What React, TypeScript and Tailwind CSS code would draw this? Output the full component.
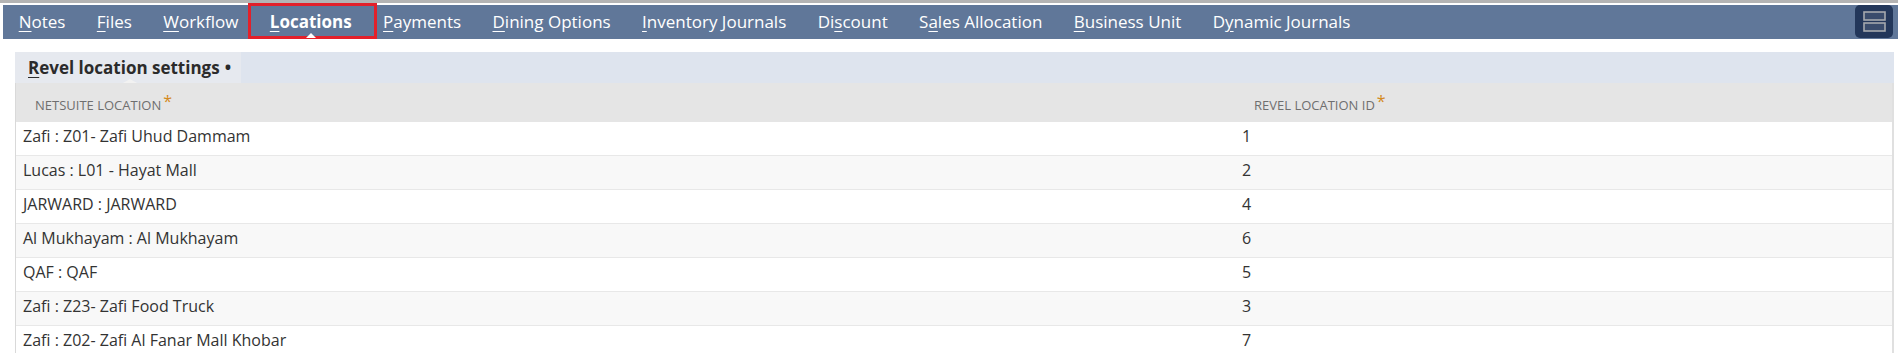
import React from 'react'

type Tab = { pre: string; key: string; post: string; active?: boolean }

const tabs: Tab[] = [
  { pre: '', key: 'N', post: 'otes' },
  { pre: '', key: 'F', post: 'iles' },
  { pre: '', key: 'W', post: 'orkflow' },
  { pre: '', key: 'L', post: 'ocations', active: true },
  { pre: '', key: 'P', post: 'ayments' },
  { pre: '', key: 'D', post: 'ining Options' },
  { pre: '', key: 'I', post: 'nventory Journals' },
  { pre: 'Di', key: 's', post: 'count' },
  { pre: 'S', key: 'a', post: 'les Allocation' },
  { pre: '', key: 'B', post: 'usiness Unit' },
  { pre: 'D', key: 'y', post: 'namic Journals' },
]

const rows = [
  ['Zafi : Z01- Zafi Uhud Dammam', '1'],
  ['Lucas : L01 - Hayat Mall', '2'],
  ['JARWARD : JARWARD', '4'],
  ['Al Mukhayam : Al Mukhayam', '6'],
  ['QAF : QAF', '5'],
  ['Zafi : Z23- Zafi Food Truck', '3'],
  ['Zafi : Z02- Zafi Al Fanar Mall Khobar', '7'],
]

function NavTab({ tab }: { tab: Tab }) {
  return (
    <div className="relative flex items-center px-[15.7px] h-full">
      <span className={tab.active ? 'font-bold' : ''}>
        {tab.pre}
        <span className="underline underline-offset-[3px]">{tab.key}</span>
        {tab.post}
      </span>
      {tab.active && (
        <>
          <span className="absolute left-[-6px] right-[-10px] top-[-2px] bottom-0 border-[3px] border-[#e3202a]" />
          <span className="absolute bottom-[1px] left-1/2 -translate-x-1/2 w-0 h-0 border-l-[5px] border-r-[5px] border-b-[5px] border-l-transparent border-r-transparent border-b-white" />
        </>
      )}
    </div>
  )
}

function Star() {
  return <span className="text-[#d48a1c] text-[16px] leading-none relative top-[-3px] ml-[2px]">*</span>
}

export default function App() {
  return (
    <div className="w-full bg-white text-[#333] font-['Open_Sans',sans-serif]">
      <div className="h-[3px] bg-[#b4b4b4]" />
      <div className="h-[2px]" />
      <div className="ml-[3px] h-[34px] bg-[#607799] flex items-stretch text-white text-[17px]">
        <div className="flex items-stretch">
          {tabs.map(t => (
            <NavTab key={t.key + t.post} tab={t} />
          ))}
        </div>
        <div className="ml-auto mr-[5px] flex items-start">
          <button className="w-[38px] h-[33px] rounded-[5px] bg-[#23375a] flex items-center justify-center">
            <svg width="23" height="21" viewBox="0 0 23 21">
              <rect x="1" y="1" width="21" height="8" fill="#3a4c6c" stroke="#a6a9ae" strokeWidth="1.6" />
              <rect x="1" y="12" width="21" height="8" fill="#3a4c6c" stroke="#a6a9ae" strokeWidth="1.6" />
            </svg>
          </button>
        </div>
      </div>

      <div className="ml-[15px] mr-[4px] mt-[13px]">
        <div className="h-[31px] bg-[#dee4ee] flex">
          <div className="relative w-[226px] bg-[#e6e9ef] flex items-center pl-[13px] text-[17px] font-bold text-[#2b2b2b]">
            <span>
              <span className="underline underline-offset-[3px]">R</span>evel location settings
              <span className="ml-[5px] font-bold">•</span>
            </span>
            <span className="absolute bottom-0 left-[108px] w-0 h-0 border-l-[7px] border-r-[7px] border-b-[4px] border-l-transparent border-r-transparent border-b-[#f2f2f2]" />
          </div>
        </div>
        <div className="border-l border-[#d9d9d9] border-r-2 border-r-[#e0e0e0]">
          <div className="h-[39px] bg-[#e5e5e5] flex items-center pt-[7px] text-[13px] text-[#6f6f6f] uppercase">
            <div className="w-[1221px] pl-[19px]">
              NetSuite Location
              <Star />
            </div>
            <div className="pl-[17px]">
              Revel Location ID
              <Star />
            </div>
          </div>
          {rows.map(([loc, id], i) => (
            <div
              key={loc}
              className={`h-[34px] flex items-center pb-[6px] text-[16px] border-b border-[#e8e8e8] ${i % 2 === 1 ? 'bg-[#f8f8f8]' : 'bg-white'}`}
            >
              <div className="w-[1221px] pl-[7px]">{loc}</div>
              <div className="pl-[5px]">{id}</div>
            </div>
          ))}
        </div>
      </div>
    </div>
  )
}
